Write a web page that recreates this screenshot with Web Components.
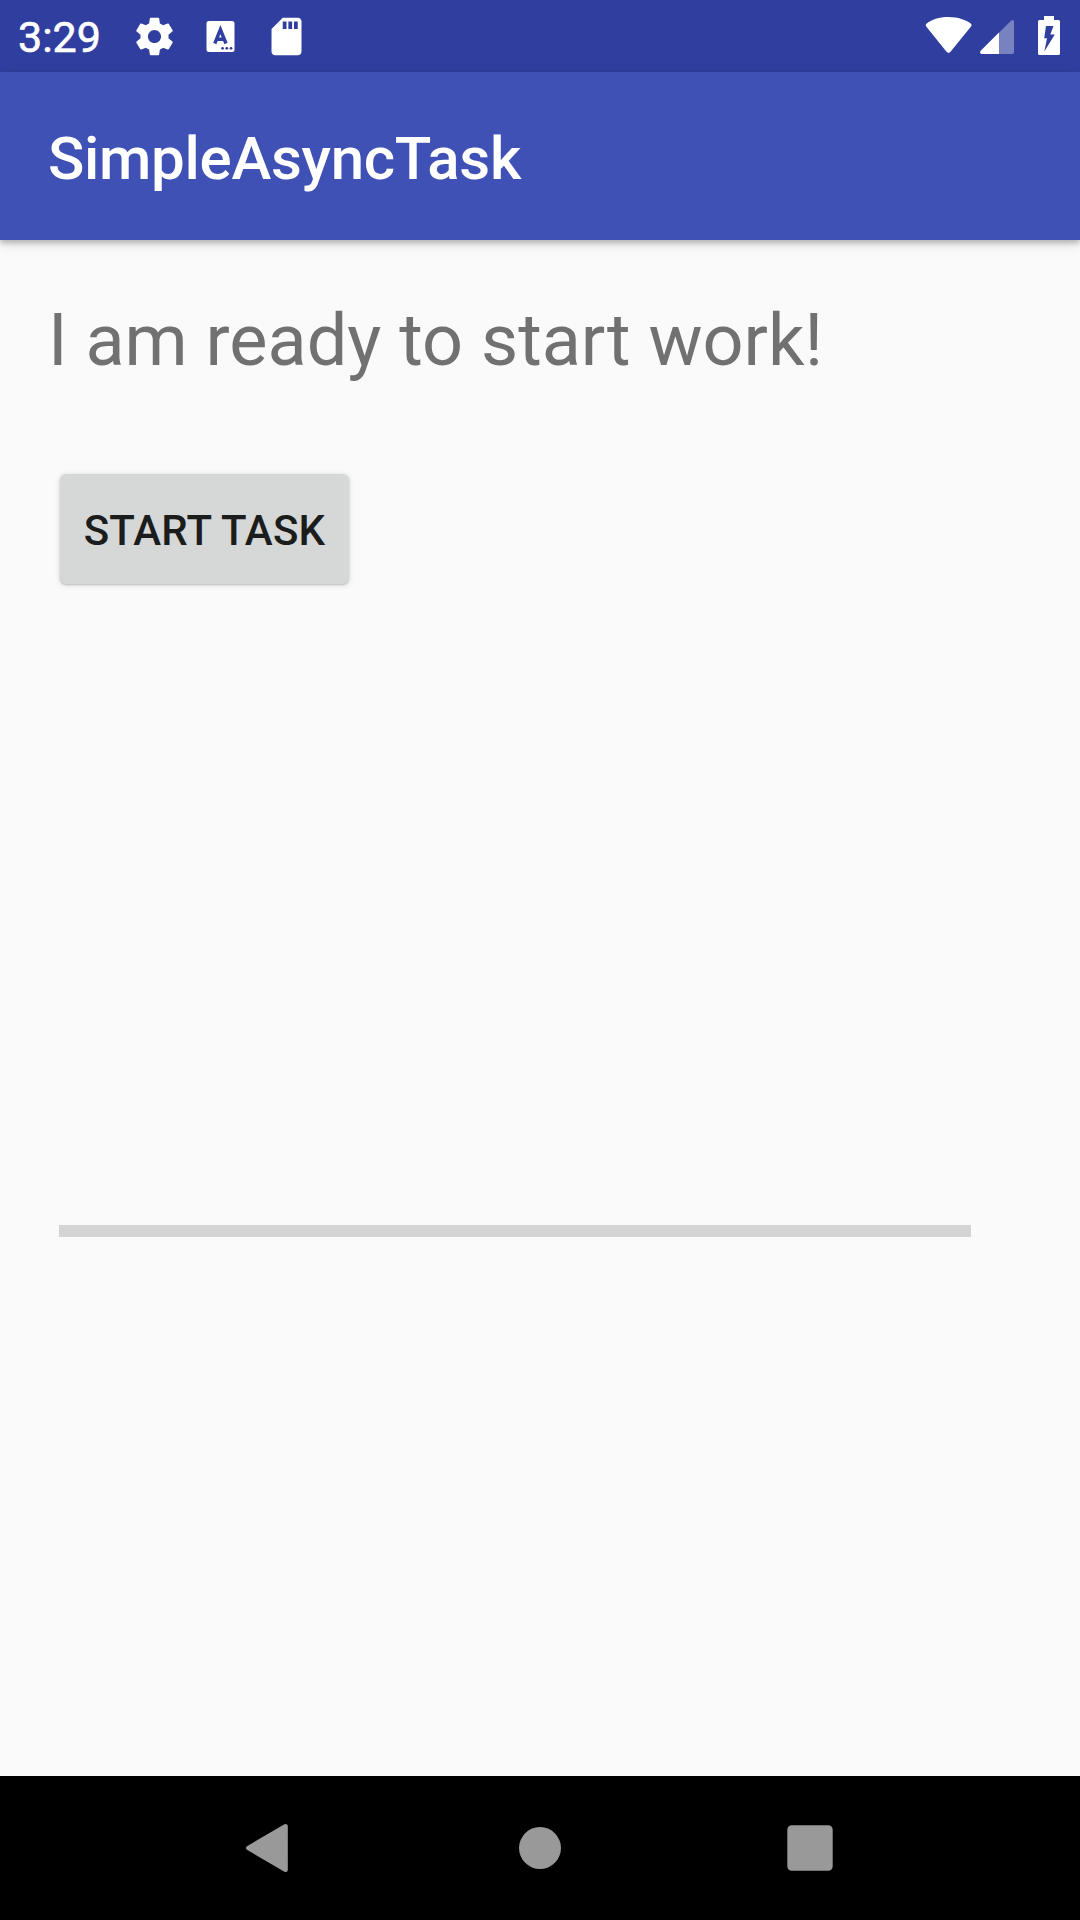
<!DOCTYPE html>
<html lang="en">
<head>
<meta charset="utf-8">
<title>SimpleAsyncTask</title>
<style>
html,body{margin:0;padding:0}
body{width:1080px;height:1920px;overflow:hidden;background:#fafafa;font-family:Roboto,"Noto Sans",sans-serif}
</style>
</head>
<body>
<async-app></async-app>
<script>
function define(name, markup) {
  const template = document.createElement('template');
  template.innerHTML = markup;
  customElements.define(name, class extends HTMLElement {
    constructor() {
      super();
      this.attachShadow({ mode: 'open' }).append(template.content.cloneNode(true));
    }
  });
}

define('status-bar', `
<style>
:host{display:flex;justify-content:space-between;height:72px;background:#303f9f;color:#fff;flex:none}
.left{display:flex;align-items:center;padding-left:18px}
.time{font-size:43px;line-height:50px;width:114px;font-weight:400;-webkit-text-stroke:.6px #fff;padding-top:2px;box-sizing:border-box}
.icons{display:flex;gap:21px}
.right{display:flex}
svg{display:block}
</style>
<div class="left">
  <div class="time"><slot></slot></div>
  <div class="icons">
    <svg width="45" height="45" viewBox="0 0 24 24" fill="#fff"><path d="M19.43 12.98c.04-.32.07-.64.07-.98s-.03-.66-.07-.98l2.11-1.65c.19-.15.24-.42.12-.64l-2-3.46c-.12-.22-.39-.3-.61-.22l-2.49 1c-.52-.4-1.08-.73-1.69-.98l-.38-2.65C14.46 2.18 14.25 2 14 2h-4c-.25 0-.46.18-.49.42l-.38 2.65c-.61.25-1.17.59-1.69.98l-2.49-1c-.23-.09-.49 0-.61.22l-2 3.46c-.13.22-.07.49.12.64l2.11 1.65c-.04.32-.07.65-.07.98s.03.66.07.98l-2.11 1.65c-.19.15-.24.42-.12.64l2 3.46c.12.22.39.3.61.22l2.49-1c.52.4 1.08.73 1.69.98l.38 2.65c.03.24.24.42.49.42h4c.25 0 .46-.18.49-.42l.38-2.65c.61-.25 1.17-.59 1.69-.98l2.49 1c.23.09.49 0 .61-.22l2-3.46c.12-.22.07-.49-.12-.64l-2.11-1.65zM12 15.5c-1.93 0-3.5-1.57-3.5-3.5s1.57-3.5 3.5-3.5 3.5 1.57 3.5 3.5-1.57 3.5-3.5 3.5z"/></svg>
    <svg width="45" height="45" viewBox="0 0 45 45"><rect x="8.5" y="7" width="28" height="31" rx="2.5" fill="#fff"/><g fill="none" stroke="#303f9f" stroke-width="3.4"><path d="M16.8 29.5L22.4 15.5L28 29.5M18.8 25.2H26"/></g><g fill="#303f9f"><circle cx="24.6" cy="34.3" r="1.4"/><circle cx="28.8" cy="34.3" r="1.4"/><circle cx="33" cy="34.3" r="1.4"/></g></svg>
    <svg width="45" height="45" viewBox="0 0 24 24" fill="#fff"><path d="M18 2h-8L4.02 8 4 20c0 1.1.9 2 2 2h12c1.1 0 2-.9 2-2V4c0-1.1-.9-2-2-2zm-6 6h-2V4h2v4zm3 0h-2V4h2v4zm3 0h-2V4h2v4z"/></svg>
  </div>
</div>
<div class="right">
  <svg width="180" height="72" viewBox="900 0 180 72">
    <path d="M948.5 17C958 17 966 19.8 971 23.8Q972.3 25 971 26.5L950.5 51.8Q948.5 54 946.5 51.8L926.2 26.5Q925 25 926.4 23.8C931.5 19.6 939 17 948.5 17z" fill="#fff"/>
    <path d="M981 50.5L1011 20.7Q1014 18.8 1014 22V52Q1014 54 1012 54H982Q978.8 53.5 981 50.5z" fill="#fff" opacity=".35"/>
    <path d="M981 50.5L999 32.6V54H982Q978.8 53.5 981 50.5z" fill="#fff"/>
    <path d="M1044 16H1054V20H1058.5Q1060 20 1060 21.5V53.5Q1060 55 1058.5 55H1039.5Q1038 55 1038 53.5V21.5Q1038 20 1039.5 20H1044z" fill="#fff"/>
    <path d="M1046 26H1053.5L1050.3 34.5H1054.8L1044.3 51.5L1047 38.3H1044.2z" fill="#303f9f"/>
  </svg>
</div>`);

define('app-bar', `
<style>
:host{display:flex;align-items:center;height:168px;padding:5px 0 0 48px;box-sizing:border-box;background:#3f51b5;color:#fff;flex:none;z-index:1;box-shadow:0 3px 5px rgba(0,0,0,.2),0 4px 12px rgba(0,0,0,.13)}
h1{margin:0;font-size:60px;font-weight:500;line-height:70px;letter-spacing:-.27px}
</style><h1><slot></slot></h1>`);

define('raised-button', `
<style>
:host{display:block}
button{display:flex;align-items:center;justify-content:center;width:289px;height:110px;padding:3px 0 0;box-sizing:border-box;border:0;border-radius:6px;background:#d6d7d7;color:#1b1c1c;font:500 42px/50px Roboto,sans-serif;letter-spacing:.2px;text-transform:uppercase;box-shadow:0 1px 2px rgba(0,0,0,.18),0 1px 6px rgba(0,0,0,.13)}
</style><button><slot></slot></button>`);

define('task-progress', `
<style>
:host{display:block;width:912px;height:12px;background:#d4d4d4}
</style>`);

define('nav-bar', `
<style>
:host{display:flex;justify-content:center;align-items:center;height:144px;background:#000;flex:none}
div{width:270px;display:flex;justify-content:center}
svg{display:block}
</style>
<div><svg width="60" height="60" viewBox="0 0 60 60"><path d="M47.8 8.5V51.5Q47.8 55 44.5 53.7L7.3 32Q4.5 30 7.3 28L44.5 6.3Q47.8 5 47.8 8.5z" fill="#999"/></svg></div>
<div><svg width="60" height="60" viewBox="0 0 60 60"><circle cx="30" cy="30" r="21" fill="#999"/></svg></div>
<div><svg width="60" height="60" viewBox="0 0 60 60"><rect x="7.3" y="7.3" width="45.4" height="45.4" rx="4.5" fill="#999"/></svg></div>`);

define('async-app', `
<style>
:host{display:flex;flex-direction:column;width:1080px;height:1920px;background:#fafafa}
main{flex:1;display:flex;flex-direction:column;align-items:flex-start;padding:59px 48px 0}
p{margin:0;font-size:72px;line-height:84px;color:#717171;white-space:nowrap}
raised-button{margin:91px 0 0 12px}
task-progress{margin:641px 0 0 11px}
</style>
<status-bar>3:29</status-bar>
<app-bar>SimpleAsyncTask</app-bar>
<main>
  <p>I am ready to start work!</p>
  <raised-button>Start Task</raised-button>
  <task-progress role="progressbar"></task-progress>
</main>
<nav-bar></nav-bar>`);
</script>
</body>
</html>
